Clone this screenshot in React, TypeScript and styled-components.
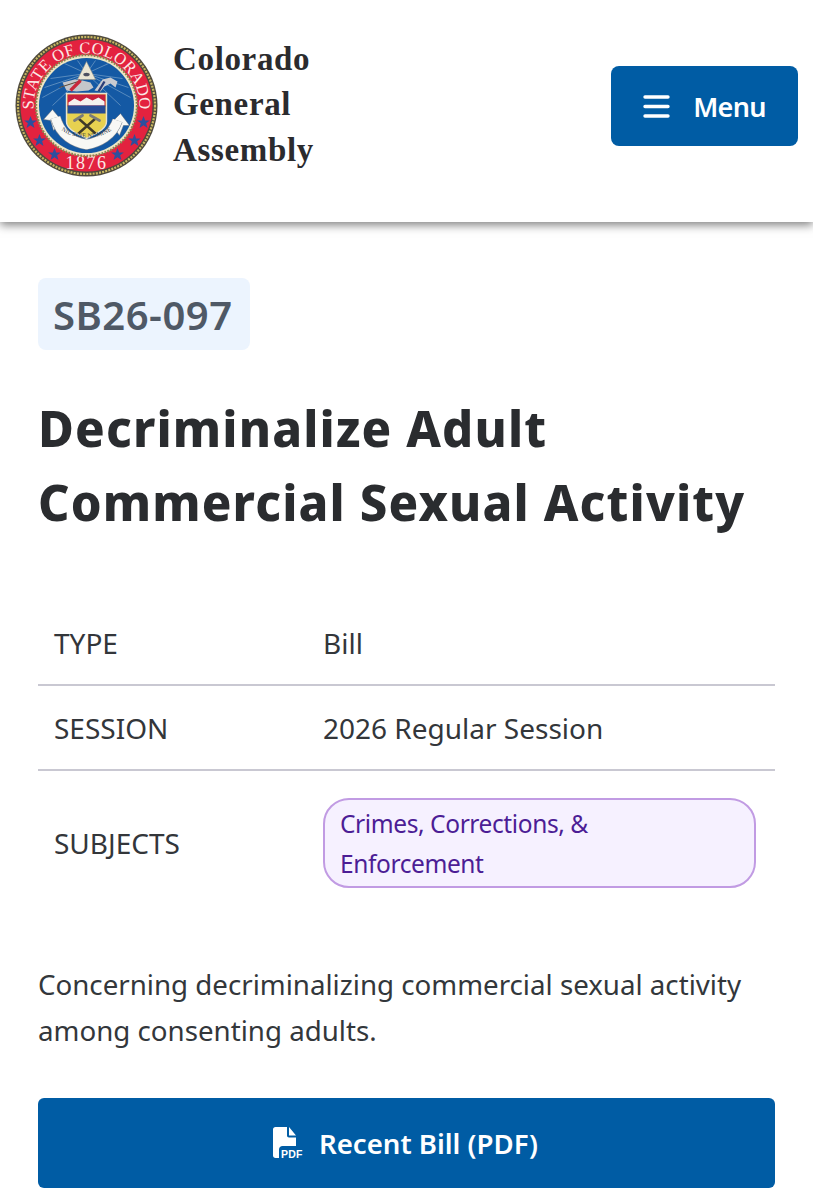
import React from "react";
import styled, { createGlobalStyle } from "styled-components";

const Global = createGlobalStyle`
  html, body { margin: 0; padding: 0; background: #fff; height: 1200px; overflow: hidden; }
  body { font-family: "Noto Sans", sans-serif; color: #212529; }
`;

const Header = styled.header`
  height: 222px;
  display: flex;
  align-items: center;
  justify-content: space-between;
  padding: 0 15px;
  background: #fff;
  box-shadow: 0 3px 9px rgba(0, 0, 0, 0.5);
  position: relative;
`;
const Brand = styled.div`
  display: flex;
  align-items: center;
  gap: 15px;
  margin-top: -12px;
`;
const BrandName = styled.div`
  font-family: "Liberation Serif", serif;
  font-weight: 700;
  font-size: 33px;
  line-height: 45.5px;
  color: #2b2b2e;
  letter-spacing: 0.65px;
`;
const MenuButton = styled.button`
  width: 187px;
  height: 80px;
  margin-top: -10px;
  display: flex;
  align-items: center;
  justify-content: center;
  gap: 23px;
  border: 0;
  border-radius: 8px;
  background: #005ca4;
  color: #fff;
  font-family: "Noto Sans", sans-serif;
  font-weight: 600;
  font-size: 27px;
  letter-spacing: -0.7px;
`;
const Main = styled.main`
  padding: 56px 38px 0;
`;
const BillBadge = styled.div`
  display: inline-block;
  height: 72px;
  line-height: 73px;
  padding: 0 17px 0 15px;
  border-radius: 8px;
  background: #ecf4fe;
  color: #4f5966;
  font-weight: 600;
  font-size: 40px;
  letter-spacing: 0.5px;
`;
const Title = styled.h1`
  margin: 41px 0 0;
  font-weight: 800;
  font-size: 49px;
  line-height: 74px;
  letter-spacing: 1.15px;
  color: #2a2c2f;
`;
const Table = styled.div`
  margin-top: 62px;
  display: grid;
  grid-template-columns: 285px 1fr;
  font-size: 28px;
  color: #33363a;
`;
const Cell = styled.div<{ $last?: boolean }>`
  display: flex;
  align-items: center;
  padding: 0 16px;
  box-sizing: border-box;
  min-height: 85px;
  border-bottom: ${(p) => (p.$last ? "0" : "2px solid #c9c8d2")};
`;
const ValueCell = styled(Cell)`
  padding: 27px 19px 27px 0;
`;
const SubjectPill = styled.div`
  width: 100%;
  box-sizing: border-box;
  padding: 4px 15px 2px;
  border: 2px solid #c19be3;
  border-radius: 26px;
  background: #f6f1ff;
  color: #4c1d95;
  font-size: 24.5px;
  line-height: 40px;
  letter-spacing: -0.4px;
`;
const PlainValue = styled.span`
  margin: -27px 0;
`;
const Summary = styled.p`
  margin: 46px 0 0;
  font-size: 27.7px;
  line-height: 46px;
  color: #33373b;
`;
const PdfButton = styled.button`
  width: 100%;
  height: 90px;
  margin-top: 45px;
  padding: 0 2px 0 0;
  display: flex;
  align-items: center;
  justify-content: center;
  gap: 16px;
  border: 0;
  border-radius: 6px;
  background: #005ca4;
  color: #fff;
  font-family: "Noto Sans", sans-serif;
  font-weight: 600;
  font-size: 27.6px;
`;

const STARS: [number, number][] = [
  [-56, 17],
  [-47, 35],
  [-32, 49],
  [31, 49],
  [48, 35],
  [57, 17],
];

const Seal = () => (
  <svg width="143" height="143" viewBox="-71.5 -71.5 143 143" aria-hidden="true">
    <defs>
      <path id="topArc" d="M -52.500 8 A 53 53 0 1 1 52.500 8" />
      <path id="mottoArc" d="M -30 20 C -18 36 18 36 30 20" />
    </defs>
    <circle r="71" fill="#4f4a3c" />
    <circle r="68.500" fill="none" stroke="#c9b862" strokeWidth="2.200" strokeDasharray="2 1.200" />
    <circle r="66" fill="#e3223f" />
    <text fontFamily="Liberation Serif, serif" fontSize="16.500" fill="#fbe9e6" letterSpacing="0.200">
      <textPath href="#topArc" startOffset="50%" textAnchor="middle">STATE OF COLORADO</textPath>
    </text>
    <text x="0" y="63" textAnchor="middle" fontFamily="Liberation Serif, serif" fontSize="18" fill="#fbe9e6" letterSpacing="1.500">1876</text>
    {STARS.map(([x, y]) => (
      <path
        key={`${x}-${y}`}
        transform={`translate(${x} ${y}) scale(1.2)`}
        fill="#2c4f9e"
        d="M0-5.500 1.400-1.700 5.300-1.700 2.200.7 3.300 4.500 0 2.300-3.300 4.500-2.200.7-5.300-1.700-1.400-1.700Z"
      />
    ))}
    <circle r="50.500" fill="#eee7c4" />
    <circle r="50.500" fill="none" stroke="#8c8450" strokeWidth="2.400" strokeDasharray="1.800 1.300" />
    <circle r="47.500" fill="#1459a4" />
    <g stroke="#86aed0" strokeWidth="0.700" opacity="0.850">
      <path d="M0-32-22-42M0-32-36-27M0-32-42-18M0-32-44-8M0-32-34 0M0-32 22-42M0-32 36-27M0-32 42-18M0-32 44-8M0-32 34 0M0-32-9-45M0-32 9-45" />
    </g>
    <path d="M0-44-9-26H9Z" fill="#eae6d3" stroke="#8d8d84" strokeWidth="0.600" />
    <ellipse cy="-31" rx="3.200" ry="1.800" fill="#4d5160" />
    <path d="M-24-23-12-26-4-25 4-23 7-18 2-15-10-14-20-15Z" fill="#c4c6ca" />
    <path d="M-27-18-5-25" stroke="#5a4a3a" strokeWidth="1" />
    <path d="M-16-15-6-25" stroke="#c8273a" strokeWidth="3.200" />
    <path d="M8-15 16-26 24-28 31-24 29-18 24-22 18-19 14-14Z" fill="#c9cbd0" />
    <path d="M12-14 18-24" stroke="#2c3f78" strokeWidth="2.400" />
    <path d="M-34 4-43 14-36 15-33 25-24 16Z" fill="#f7f7f4" stroke="#55606e" strokeWidth="0.500" />
    <path d="M34 8 43 20 37 20 33 30 24 18Z" fill="#f7f7f4" stroke="#55606e" strokeWidth="0.500" />
    <path d="M-31 12C-26 30-12 37 0 39 12 37 26 30 31 15" fill="none" stroke="#7d8690" strokeWidth="10.500" />
    <path d="M-31 12C-26 30-12 37 0 39 12 37 26 30 31 15" fill="none" stroke="#f8f8f5" strokeWidth="9.500" />
    <path d="M-20-12H20V16C20 24 9 28 0 33-9 28-20 24-20 16Z" fill="#e7d150" stroke="#e8e3d0" strokeWidth="1.400" />
    <path d="M-19-11H19V1H-19Z" fill="#c81f3d" />
    <path d="M-18-3-12-7-6-4 0-8 6-5 12-8 18-4V0H-18Z" fill="#f4f1ee" />
    <path d="M-19 0H19V8H-19Z" fill="#274c96" />
    <path d="M-8 13 9 28M9 13-8 28" stroke="#3f3a28" strokeWidth="2.400" />
    <path d="M-12 15-4 10M4 10 13 15" stroke="#7b7b78" strokeWidth="2.800" strokeLinecap="round" />
    <text fontFamily="Liberation Serif, serif" fontSize="6" fill="#30343c" letterSpacing="0.200">
      <textPath href="#mottoArc" startOffset="50%" textAnchor="middle">NIL SINE NUMINE</textPath>
    </text>
  </svg>
);

const Hamburger = () => (
  <svg width="27" height="23" viewBox="0 0 27 23" aria-hidden="true">
    <g stroke="#fff" strokeWidth="3.400" strokeLinecap="round">
      <path d="M2 2h23M2 11.500h23M2 21h23" />
    </g>
  </svg>
);

const PdfIcon = () => (
  <svg width="30" height="32" viewBox="0 0 30 32" aria-hidden="true">
    <path fill="#fff" d="M2.500 0H14v8.500c0 1.200.8 2 2 2h7V19H9.500C7.500 19 6 20.500 6 22.500V31H2.500C1 31 0 30 0 28.500V2.500C0 1 1 0 2.500 0zM16 0l7 8.500H16z" />
    <text x="8" y="30.500" fontFamily="Liberation Sans, sans-serif" fontWeight="700" fontSize="10.500" fill="#fff" letterSpacing="0.200">PDF</text>
  </svg>
);

export default function App() {
  return (
    <>
      <Global />
      <Header>
        <Brand>
          <Seal />
          <BrandName>
            Colorado
            <br />
            General
            <br />
            Assembly
          </BrandName>
        </Brand>
        <MenuButton>
          <Hamburger />
          Menu
        </MenuButton>
      </Header>
      <Main>
        <BillBadge>SB26-097</BillBadge>
        <Title>
          Decriminalize Adult
          <br />
          Commercial Sexual Activity
        </Title>
        <Table>
          <Cell>TYPE</Cell>
          <ValueCell><PlainValue>Bill</PlainValue></ValueCell>
          <Cell>SESSION</Cell>
          <ValueCell><PlainValue>2026 Regular Session</PlainValue></ValueCell>
          <Cell $last>SUBJECTS</Cell>
          <ValueCell $last>
            <SubjectPill>
              Crimes, Corrections, &amp;
              <br />
              Enforcement
            </SubjectPill>
          </ValueCell>
        </Table>
        <Summary>
          Concerning decriminalizing commercial sexual activity
          <br />
          among consenting adults.
        </Summary>
        <PdfButton>
          <PdfIcon />
          Recent Bill (PDF)
        </PdfButton>
      </Main>
    </>
  );
}
